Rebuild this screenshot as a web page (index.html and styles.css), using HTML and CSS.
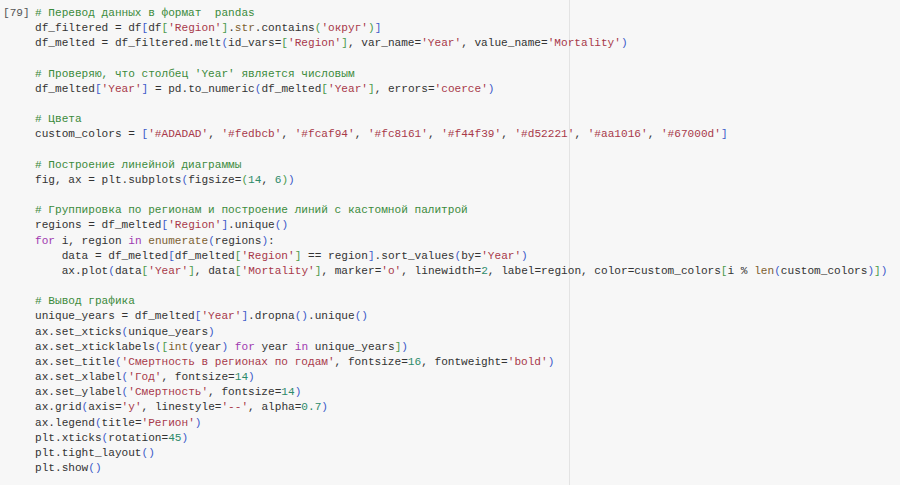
FILE: index.html
```html
<!DOCTYPE html>
<html lang="ru">
<head>
<meta charset="utf-8">
<link rel="stylesheet" href="styles.css">
</head>
<body>
<div class="cell">
<div class="prompt">[79]</div>
<pre class="code"><span class="c"># Перевод данных в формат  pandas</span>
df_filtered = df<span class="b">[</span>df<span class="b2">[</span><span class="s">'Region'</span><span class="b2">]</span>.<span class="f">str</span>.contains<span class="b2">(</span><span class="s">'округ'</span><span class="b2">)</span><span class="b">]</span>
df_melted = df_filtered.melt<span class="b">(</span>id_vars=<span class="b2">[</span><span class="s">'Region'</span><span class="b2">]</span>, var_name=<span class="s">'Year'</span>, value_name=<span class="s">'Mortality'</span><span class="b">)</span>

<span class="c"># Проверяю, что столбец 'Year' является числовым</span>
df_melted<span class="b">[</span><span class="s">'Year'</span><span class="b">]</span> = pd.to_numeric<span class="b">(</span>df_melted<span class="b2">[</span><span class="s">'Year'</span><span class="b2">]</span>, errors=<span class="s">'coerce'</span><span class="b">)</span>

<span class="c"># Цвета</span>
custom_colors = <span class="b">[</span><span class="s">'#ADADAD'</span>, <span class="s">'#fedbcb'</span>, <span class="s">'#fcaf94'</span>, <span class="s">'#fc8161'</span>, <span class="s">'#f44f39'</span>, <span class="s">'#d52221'</span>, <span class="s">'#aa1016'</span>, <span class="s">'#67000d'</span><span class="b">]</span>

<span class="c"># Построение линейной диаграммы</span>
fig, ax = plt.subplots<span class="b">(</span>figsize=<span class="b2">(</span><span class="n">14</span>, <span class="n">6</span><span class="b2">)</span><span class="b">)</span>

<span class="c"># Группировка по регионам и построение линий с кастомной палитрой</span>
regions = df_melted<span class="b">[</span><span class="s">'Region'</span><span class="b">]</span>.unique<span class="b">()</span>
<span class="k">for</span> i, region <span class="k">in</span> <span class="f">enumerate</span><span class="b">(</span>regions<span class="b">)</span>:
    data = df_melted<span class="b">[</span>df_melted<span class="b2">[</span><span class="s">'Region'</span><span class="b2">]</span> == region<span class="b">]</span>.sort_values<span class="b">(</span>by=<span class="s">'Year'</span><span class="b">)</span>
    ax.plot<span class="b">(</span>data<span class="b2">[</span><span class="s">'Year'</span><span class="b2">]</span>, data<span class="b2">[</span><span class="s">'Mortality'</span><span class="b2">]</span>, marker=<span class="s">'o'</span>, linewidth=<span class="n">2</span>, label=region, color=custom_colors<span class="b2">[</span>i % <span class="f">len</span><span class="b">(</span>custom_colors<span class="b">)</span><span class="b2">]</span><span class="b">)</span>

<span class="c"># Вывод графика</span>
unique_years = df_melted<span class="b">[</span><span class="s">'Year'</span><span class="b">]</span>.dropna<span class="b">()</span>.unique<span class="b">()</span>
ax.set_xticks<span class="b">(</span>unique_years<span class="b">)</span>
ax.set_xticklabels<span class="b">(</span><span class="b2">[</span><span class="f">int</span><span class="b">(</span>year<span class="b">)</span> <span class="k">for</span> year <span class="k">in</span> unique_years<span class="b2">]</span><span class="b">)</span>
ax.set_title<span class="b">(</span><span class="s">'Смертность в регионах по годам'</span>, fontsize=<span class="n">16</span>, fontweight=<span class="s">'bold'</span><span class="b">)</span>
ax.set_xlabel<span class="b">(</span><span class="s">'Год'</span>, fontsize=<span class="n">14</span><span class="b">)</span>
ax.set_ylabel<span class="b">(</span><span class="s">'Смертность'</span>, fontsize=<span class="n">14</span><span class="b">)</span>
ax.grid<span class="b">(</span>axis=<span class="s">'y'</span>, linestyle=<span class="s">'--'</span>, alpha=<span class="n">0.7</span><span class="b">)</span>
ax.legend<span class="b">(</span>title=<span class="s">'Регион'</span><span class="b">)</span>
plt.xticks<span class="b">(</span>rotation=<span class="n">45</span><span class="b">)</span>
plt.tight_layout<span class="b">()</span>
plt.show<span class="b">()</span></pre>
</div>
</body>
</html>
```
FILE: styles.css
```css
html, body {
  margin: 0;
  padding: 0;
  background: #f7f7f7;
}
body {
  width: 900px;
  height: 485px;
  overflow: hidden;
}
.cell {
  display: flex;
  padding-top: 6px;
  font-family: "Liberation Mono", "Noto Sans Mono", monospace;
  font-size: 11.1px;
  line-height: 15.17px;
  color: #333333;
}
.prompt {
  width: 32px;
  padding-left: 3px;
  flex: none;
  color: #555;
}
.code {
  margin: 0;
  font: inherit;
  flex: 1;
  min-height: 480px;
  background-image: linear-gradient(#e3e3e3, #e3e3e3);
  background-size: 1px 100%;
  background-repeat: no-repeat;
  background-position: 534px 0;
  margin-top: -6px;
  padding-top: 6px;
}
.c { color: #3b8a3b; }
.s { color: #a8394a; }
.n { color: #2d8a6a; }
.k { color: #a03ab0; }
.f { color: #7c6030; }
.b { color: #3d5bc9; }
.b2 { color: #4c9a4c; }
```
